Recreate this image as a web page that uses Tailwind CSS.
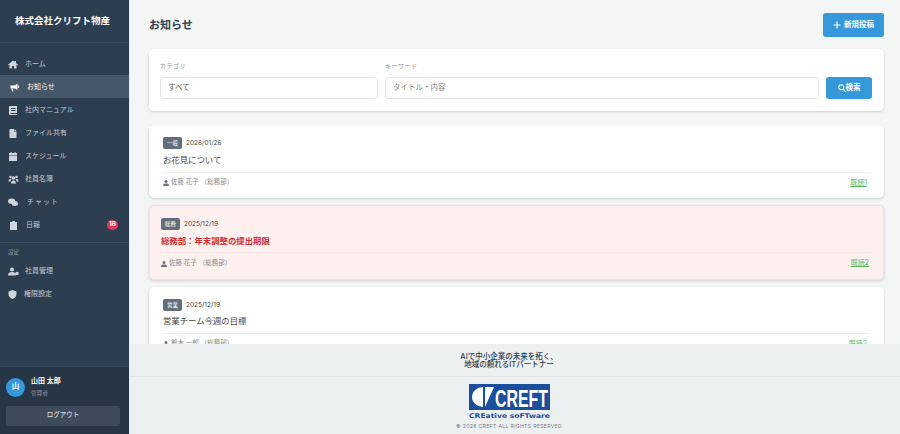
<!DOCTYPE html>
<html lang="ja">
<head>
<meta charset="UTF-8">
<title>お知らせ</title>
<script src="https://cdn.jsdelivr.net/npm/@tailwindcss/browser@4"></script>
</head>
<body class="h-screen overflow-hidden flex bg-[#f4f6f6] text-[#2c3e50] font-['Inter','Noto_Sans_CJK_JP',sans-serif]">

<!-- Sidebar -->
<aside class="w-[130px] shrink-0 h-full flex flex-col bg-[#2c3e50] border-r border-[#e5e8e8]">
  <div class="h-[43px] flex items-center pl-[15px] border-b border-[#38495b] text-[9.5px] font-bold text-white">株式会社クリフト物産</div>
  <nav class="pt-[9px] flex-1 text-[7px] text-[#c3cad1]">
    <a class="h-[23px] pt-[1px] flex items-center pl-[8px] gap-[7px]"><svg class="w-[10px] h-[9px]" viewBox="0 0 20 18" fill="#cfd5da"><path d="M10 1 0 9.5l1.2 1.4L3 9.4V17h5v-5h4v5h5V9.4l1.8 1.5L20 9.5 16 6V2h-3v1.5z"/></svg>ホーム</a>
    <a class="h-[23px] pt-[1px] flex items-center pl-[9px] gap-[8px] bg-[#465769] text-white"><svg class="w-[10px] h-[9px]" viewBox="0 0 20 18" fill="#fff"><path d="M17 1v13l-5-3H4L3 11V5h9zM18 5h2v5h-2zM5 12h3l1 5H6z"/></svg>お知らせ</a>
    <a class="h-[23px] pt-[1px] flex items-center pl-[9px] gap-[8px]"><svg class="w-[8px] h-[9px]" viewBox="0 0 16 18" fill="#cfd5da"><path d="M2 0h14v14H3v2h13v2H2a2 2 0 0 1-2-2V2a2 2 0 0 1 2-2zm2 4v2h9V4zm0 4v2h9V8z"/></svg>社内マニュアル</a>
    <a class="h-[23px] pt-[1px] flex items-center pl-[9px] gap-[8px]"><svg class="w-[8px] h-[9px]" viewBox="0 0 14 18" fill="#cfd5da"><path d="M1 0h8v5h5v13H0V1zM10 0l4 4h-4z"/></svg>ファイル共有</a>
    <a class="h-[23px] pt-[1px] flex items-center pl-[9px] gap-[8px]"><svg class="w-[8px] h-[9px]" viewBox="0 0 16 18" fill="#cfd5da"><path d="M3 0h2v2h6V0h2v2h3v4H0V2h3zM0 7h16v11H0z"/></svg>スケジュール</a>
    <a class="h-[23px] pt-[1px] flex items-center pl-[8px] gap-[6px]"><svg class="w-[11px] h-[9px]" viewBox="0 0 22 18" fill="#cfd5da"><circle cx="5" cy="4" r="2.5"/><circle cx="17" cy="4" r="2.5"/><circle cx="11" cy="6" r="3.5"/><path d="M1 13c0-3 1-5 4-5l2 1c-1 1-2 2-2 4zM21 13c0-3-1-5-4-5l-2 1c1 1 2 2 2 4zM6 17c0-4 2-6 5-6s5 2 5 6z"/></svg>社員名簿</a>
    <a class="h-[23px] pt-[1px] flex items-center pl-[8px] gap-[9px] tracking-[1px]"><svg class="w-[10px] h-[9px]" viewBox="0 0 22 18" fill="#cfd5da"><ellipse cx="8" cy="6" rx="8" ry="6"/><ellipse cx="15" cy="11" rx="7" ry="5.5"/></svg>チャット</a>
    <a class="h-[23px] pt-[1px] flex items-center pl-[10px] gap-[9px] relative"><svg class="w-[7px] h-[9px]" viewBox="0 0 14 18" fill="#cfd5da"><path d="M0 2h4a3 3 0 0 1 6 0h4v16H0z"/></svg>日報<span class="absolute left-[107px] top-[7px] w-[11px] h-[10px] rounded-full bg-[#e8384f] text-white text-[6.5px] font-bold flex items-center justify-center">18</span></a>
    <div class="mt-[6px] border-t border-[#3b4c5e] pt-[5px] pl-[8px] text-[5.5px] text-[#8c98a5] h-[18px]">設定</div>
    <a class="h-[23px] flex items-center pl-[8px] gap-[6px]"><svg class="w-[11px] h-[9px]" viewBox="0 0 22 18" fill="#cfd5da"><circle cx="8" cy="5" r="4"/><path d="M0 17c0-5 3-7 8-7s8 2 8 7z"/><circle cx="18" cy="13" r="3.5"/></svg>社員管理</a>
    <a class="h-[23px] flex items-center pl-[8px] gap-[7px]"><svg class="w-[9px] h-[9px]" viewBox="0 0 18 18" fill="#cfd5da"><path d="M9 0 17 3v5c0 5-3 8-8 10-5-2-8-5-8-10V3z"/></svg>権限設定</a>
  </nav>
  <div class="h-[68px] bg-[#263646] border-t border-[#38495b] px-[6px] pt-[8px]">
    <div class="flex items-center gap-[6px]">
      <div class="w-[19px] h-[19px] rounded-full bg-[#3498db] text-white text-[7.5px] font-bold flex items-center justify-center">山</div>
      <div>
        <div class="text-[7px] font-bold text-white leading-[12px]">山田 太郎</div>
        <div class="text-[5.5px] text-[#8c98a5] leading-[12px] tracking-[0.3px]">管理者</div>
      </div>
    </div>
    <button class="mt-[7px] w-[114px] h-[20px] rounded-[3px] bg-[#3d4b5b] text-[#d5dade] text-[6.5px] font-medium">ログアウト</button>
  </div>
</aside>

<div class="flex-1 min-w-0 flex flex-col h-full">
  <!-- Main -->
  <main class="h-[344px] shrink-0 overflow-hidden pr-[16px] pl-[19px] pt-[13px]">
    <div class="h-[24px] flex items-center justify-between">
      <h1 class="pt-[1px] text-[11px] font-bold text-[#2c3e50]">お知らせ</h1>
      <button class="w-[61px] h-[24px] rounded-[3px] bg-[#3498db] text-white text-[7.5px] font-bold flex items-center justify-center gap-[3px]"><svg class="w-[8px] h-[8px]" viewBox="0 0 8 8" stroke="#fff" stroke-width="1.2"><path d="M4 .5v7M.5 4h7"/></svg>新規投稿</button>
    </div>

    <!-- Filter -->
    <section class="mt-[12px] h-[62px] rounded-[5px] bg-white shadow-[0_1px_3px_rgba(0,0,0,0.16)] px-[11px] pt-[12px] flex gap-[7px]">
      <div class="w-[218px]">
        <div class="text-[6px] text-[#7f8c8d] h-[16px] leading-[9px] tracking-[0.5px]">カテゴリ</div>
        <div class="h-[22px] rounded-[3px] border border-[#e5e8e8] px-[7px] flex items-center text-[7.5px] text-[#555]">すべて</div>
      </div>
      <div class="w-[434px]">
        <div class="text-[6px] text-[#7f8c8d] h-[16px] leading-[9px] tracking-[0.5px]">キーワード</div>
        <div class="h-[22px] rounded-[3px] border border-[#e5e8e8] px-[7px] flex items-center text-[7.5px] text-[#808080]">タイトル・内容</div>
      </div>
      <button class="mt-[16px] w-[46px] h-[22px] rounded-[3px] bg-[#3498db] text-white text-[7.5px] font-bold flex items-center justify-center"><svg class="w-[8px] h-[8px]" viewBox="0 0 16 16" fill="none" stroke="#fff" stroke-width="2.4"><circle cx="6.5" cy="6.5" r="5"/><path d="m10.5 10.5 5 5"/></svg>検索</button>
    </section>

    <!-- List -->
    <article class="mt-[14px] h-[73px] rounded-[5px] bg-white shadow-[0_1px_3px_rgba(0,0,0,0.16)] px-[14px] pt-[12px]">
      <div class="flex items-center gap-[4px] h-[12px]"><span class="w-[19px] h-[12px] rounded-[2px] bg-[#636e7b] text-white text-[5.5px] flex items-center justify-center">一般</span><span class="pt-[1px] text-[6.5px] text-[#444]">2026/01/26</span></div>
      <div class="mt-[4px] h-[14px] text-[8.4px] text-[#444] leading-[14px]">お花見について</div>
      <div class="mt-[5px] border-t border-[#f0f0f0] pt-[4px] pr-[3px] flex justify-between items-center h-[17px] text-[6.5px] text-[#8a8a8a]"><span class="flex items-center gap-[2px]"><svg class="w-[6px] h-[6px]" viewBox="0 0 12 12" fill="#6b7480"><circle cx="6" cy="3" r="3"/><path d="M0 12c0-4 2-5 6-5s6 1 6 5z"/></svg>佐藤 花子 （総務部）</span><span class="text-[7px] text-[#5cb85c] underline">既読1</span></div>
    </article>

    <article class="mt-[7px] h-[75px] rounded-[5px] bg-[#fff0f0] border border-[#fbdcdc] shadow-[0_1px_3px_rgba(0,0,0,0.16)] px-[11px] pt-[12px]">
      <div class="flex items-center gap-[4px] h-[12px]"><span class="w-[19px] h-[12px] rounded-[2px] bg-[#636e7b] text-white text-[5.5px] flex items-center justify-center">総務</span><span class="pt-[1px] text-[6.5px] text-[#444]">2025/12/19</span></div>
      <div class="mt-[4px] h-[14px] text-[8.4px] font-bold text-[#d32f2f] leading-[14px]">総務部：年末調整の提出期限</div>
      <div class="mt-[4px] border-t border-[#f8e6e6] pt-[4px] pr-[3px] flex justify-between items-center h-[18px] text-[6.5px] text-[#8a8a8a]"><span class="flex items-center gap-[2px]"><svg class="w-[6px] h-[6px]" viewBox="0 0 12 12" fill="#6b7480"><circle cx="6" cy="3" r="3"/><path d="M0 12c0-4 2-5 6-5s6 1 6 5z"/></svg>佐藤 花子 （総務部）</span><span class="text-[7px] text-[#5cb85c] underline">既読2</span></div>
    </article>

    <article class="mt-[7px] h-[73px] rounded-[5px] bg-white shadow-[0_1px_3px_rgba(0,0,0,0.16)] px-[14px] pt-[12px]">
      <div class="flex items-center gap-[4px] h-[12px]"><span class="w-[19px] h-[12px] rounded-[2px] bg-[#636e7b] text-white text-[5.5px] flex items-center justify-center">営業</span><span class="pt-[1px] text-[6.5px] text-[#444]">2025/12/19</span></div>
      <div class="mt-[3px] h-[14px] text-[8.4px] text-[#444] leading-[14px]">営業チーム今週の目標</div>
      <div class="mt-[5px] border-t border-[#f0f0f0] pt-[4px] pr-[3px] flex justify-between items-center h-[17px] text-[6.5px] text-[#8a8a8a]"><span class="flex items-center gap-[2px]"><svg class="w-[6px] h-[6px]" viewBox="0 0 12 12" fill="#6b7480"><circle cx="6" cy="3" r="3"/><path d="M0 12c0-4 2-5 6-5s6 1 6 5z"/></svg>鈴木 一郎 （総務部）</span><span class="text-[7px] text-[#5cb85c] underline">既読2</span></div>
    </article>
  </main>

  <!-- Footer -->
  <footer class="flex-1 bg-[#edf0f0] flex flex-col items-center">
    <div class="w-full h-[33px] pt-[1px] pr-[12px] border-b border-[#dde2e2] flex flex-col items-center justify-center text-[7.5px] font-medium text-[#2c3e50] leading-[8px]">
      <div>AIで中小企業の未来を拓く、</div><div>地域の頼れるITパートナー</div>
    </div>
    <div class="w-full pr-[12px] flex flex-col items-center">
      <svg class="mt-[7px]" width="81" height="35" viewBox="0 0 81 35">
        <rect width="81" height="26" fill="#1b4f9c"/>
        <path d="M14 3 A11 10 0 0 0 14 23z" fill="#fff"/>
        <path d="M16 3h9L16 23z" fill="#fff"/>
        <text x="26" y="23" font-family="Liberation Sans" font-weight="700" font-size="23" fill="#fff" textLength="53" lengthAdjust="spacingAndGlyphs">CREFT</text>
        <text x="0" y="34" font-family="DejaVu Sans" font-weight="700" font-size="6.5" fill="#1b4f9c" textLength="81" lengthAdjust="spacingAndGlyphs">CREative soFTware</text>
      </svg>
      <div class="mt-[4px] text-[5px] text-[#6f7b84] tracking-[0.4px]">© 2026 CREFT ALL RIGHTS RESERVED</div>
    </div>
  </footer>
</div>
</body>
</html>
